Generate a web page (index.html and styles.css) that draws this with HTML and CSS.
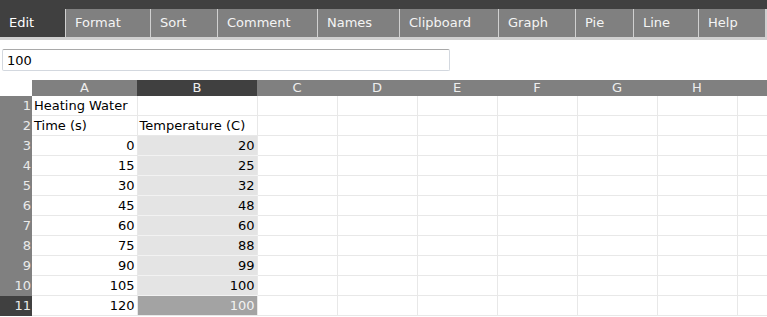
FILE: index.html
```html
<!DOCTYPE html>
<html lang="en">
  <head>
    <meta charset="UTF-8" />
    <title>Sheet</title>
    <link rel="stylesheet" href="styles.css">
  </head>
  <body>
    <nav class="menubar">
      <ul>
        <li class="selected">Edit</li>
        <li>Format</li>
        <li>Sort</li>
        <li>Comment</li>
        <li>Names</li>
        <li>Clipboard</li>
        <li>Graph</li>
        <li>Pie</li>
        <li>Line</li>
        <li>Help</li>
      </ul>
    </nav>

    <div class="formula">
      <input type="text" value="100" />
    </div>

    <table class="sheet">
      <colgroup>
        <col class="c-row" />
        <col class="c-a" />
        <col class="c-b" />
        <col class="c-std" /><col class="c-std" /><col class="c-std" />
        <col class="c-std" /><col class="c-std" /><col class="c-std" />
        <col class="c-last" />
      </colgroup>
      <thead>
        <tr>
          <th class="corner"></th>
          <th>A</th>
          <th class="cur">B</th>
          <th>C</th><th>D</th><th>E</th><th>F</th><th>G</th><th>H</th><th></th>
        </tr>
      </thead>
      <tbody>
        <tr><th>1</th><td>Heating Water</td><td></td><td></td><td></td><td></td><td></td><td></td><td></td><td></td></tr>
        <tr><th>2</th><td>Time (s)</td><td>Temperature (C)</td><td></td><td></td><td></td><td></td><td></td><td></td><td></td></tr>
        <tr><th>3</th><td class="num">0</td><td class="num sel">20</td><td></td><td></td><td></td><td></td><td></td><td></td><td></td></tr>
        <tr><th>4</th><td class="num">15</td><td class="num sel">25</td><td></td><td></td><td></td><td></td><td></td><td></td><td></td></tr>
        <tr><th>5</th><td class="num">30</td><td class="num sel">32</td><td></td><td></td><td></td><td></td><td></td><td></td><td></td></tr>
        <tr><th>6</th><td class="num">45</td><td class="num sel">48</td><td></td><td></td><td></td><td></td><td></td><td></td><td></td></tr>
        <tr><th>7</th><td class="num">60</td><td class="num sel">60</td><td></td><td></td><td></td><td></td><td></td><td></td><td></td></tr>
        <tr><th>8</th><td class="num">75</td><td class="num sel">88</td><td></td><td></td><td></td><td></td><td></td><td></td><td></td></tr>
        <tr><th>9</th><td class="num">90</td><td class="num sel">99</td><td></td><td></td><td></td><td></td><td></td><td></td><td></td></tr>
        <tr><th>10</th><td class="num">105</td><td class="num sel">100</td><td></td><td></td><td></td><td></td><td></td><td></td><td></td></tr>
        <tr><th class="cur">11</th><td class="num">120</td><td class="num active">100</td><td></td><td></td><td></td><td></td><td></td><td></td><td></td></tr>
      </tbody>
    </table>
  </body>
</html>
```

FILE: styles.css
```css
body {
  font-family: "DejaVu Sans", Verdana, sans-serif;
  font-size: 13px;
  margin: 0;
  background-color: #fff;
  color: #000;
  overflow: hidden;
}
.menubar {
  background-color: #404040;
  padding-top: 9px;
}
.menubar ul {
  list-style-type: none;
  margin: 0;
  padding: 0 2px 3px 0;
  display: grid;
  grid-template-columns: 65px 84px 66px 99px 81px 98px 76px 57px 64px 66px;
  column-gap: 1px;
  background-color: #d0d0d0;
}
.menubar li {
  background-color: #808080;
  color: #f4f4f4;
  height: 28px;
  line-height: 28px;
  padding-left: 9px;
  white-space: nowrap;
}
.menubar li.selected {
  background-color: #404040;
  color: #fff;
}
.formula {
  padding: 9px 0 9px 2px;
}
.formula input {
  box-sizing: border-box;
  width: 448px;
  height: 22px;
  margin: 0;
  padding: 0 4px;
  font-family: inherit;
  font-size: 13px;
  color: #000;
  border: 1px solid #d3d8df;
  border-top-color: #a9a9a9;
  border-radius: 2px;
}
.sheet {
  border-collapse: collapse;
  table-layout: fixed;
  width: 767px;
}
.c-row { width: 32px; }
.c-a { width: 105px; }
.c-b { width: 120px; }
.c-std { width: 80px; }
.c-last { width: 30px; }
.sheet thead th {
  background-color: #808080;
  color: #eee;
  font-weight: normal;
  height: 16px;
  line-height: 16px;
  padding: 0;
  text-align: center;
}
.sheet thead th.corner {
  background-color: #fff;
}
.sheet th.cur,
.sheet thead th.cur {
  background-color: #404040;
}
.sheet tbody th {
  background-color: #808080;
  color: #eaeaea;
  font-weight: normal;
  text-align: right;
  padding: 0 1px 0 0;
  height: 19px;
  line-height: 19px;
}
.sheet td {
  height: 19px;
  line-height: 19px;
  padding: 0 2px;
  border-right: 1px solid #e8e8e8;
  border-bottom: 1px solid #e8e8e8;
  white-space: nowrap;
  overflow: hidden;
}
.sheet td.num {
  text-align: right;
}
.sheet td.sel {
  background-color: #e4e4e4;
  border-bottom-color: #f2f2f2;
}
.sheet td.active {
  background-color: #a3a3a3;
  color: #f2f2f2;
}
```
